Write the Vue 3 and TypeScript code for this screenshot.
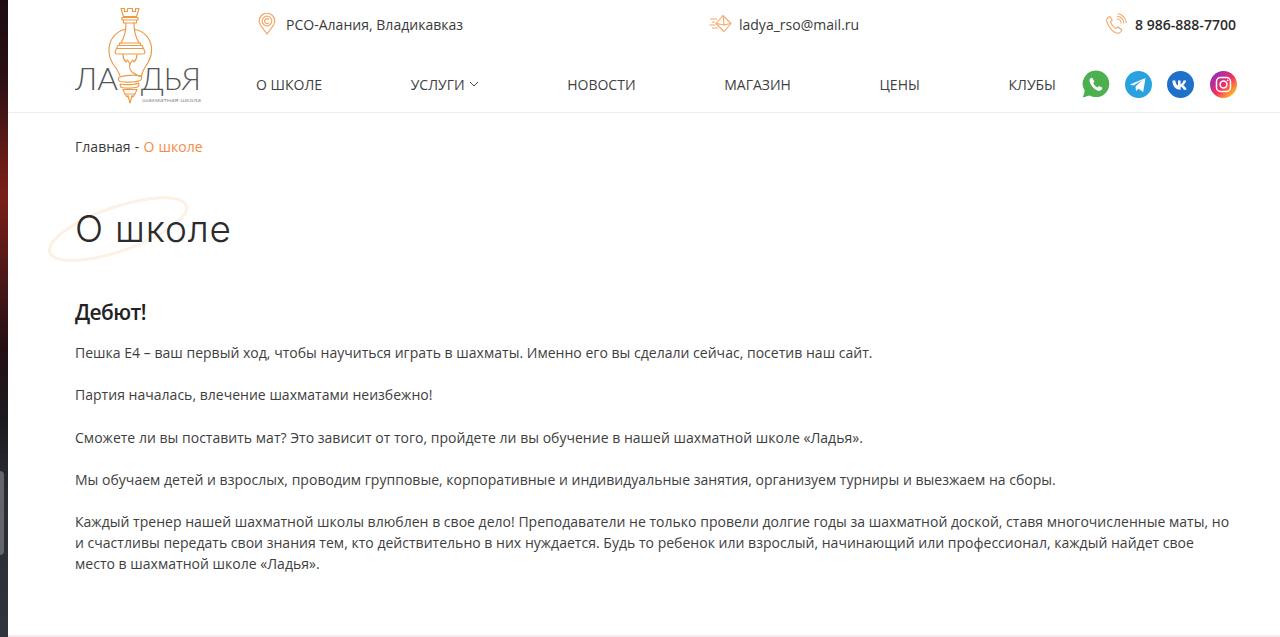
<script setup lang="ts">
const navItems = [
  { label: "О ШКОЛЕ", caret: false },
  { label: "УСЛУГИ", caret: true },
  { label: "НОВОСТИ", caret: false },
  { label: "МАГАЗИН", caret: false },
  { label: "ЦЕНЫ", caret: false },
  { label: "КЛУБЫ", caret: false },
];

const paragraphs = [
  "Пешка Е4 – ваш первый ход, чтобы научиться играть в шахматы. Именно его вы сделали сейчас, посетив наш сайт.",
  "Партия началась, влечение шахматами неизбежно!",
  "Сможете ли вы поставить мат? Это зависит от того, пройдете ли вы обучение в нашей шахматной школе «Ладья».",
  "Мы обучаем детей и взрослых, проводим групповые, корпоративные и индивидуальные занятия, организуем турниры и выезжаем на сборы.",
  "Каждый тренер нашей шахматной школы влюблен в свое дело! Преподаватели не только провели долгие годы за шахматной доской, ставя многочисленные маты, но и счастливы передать свои знания тем, кто действительно в них нуждается. Будь то ребенок или взрослый, начинающий или профессионал, каждый найдет свое место в шахматной школе «Ладья».",
];
</script>

<template>
  <div class="shell">
    <aside class="desktop-edge"><span class="edge-handle"></span></aside>
    <div class="page">
      <header class="site-header">
        <svg class="logo" viewBox="75 0 130 110" width="130" height="110" aria-label="Ладья">
          <g fill="none" stroke="#ee9a45" stroke-width="1.150" stroke-linejoin="round" stroke-linecap="round">
            <path d="M121 8.500h3.500v3h3v-3h5v3h3v-3h3.500l-2.500 8h-13z" />
            <path d="M122 17.500h16v2.500h-16zM123.500 20h13v3h-13z" />
            <path d="M126 23c0 8-1.500 14-5 20M134 23c0 8 1.500 14 5 20" />
            <path d="M119.500 43h21v2.500h-21zM118 45.500h24l1.500 3h-27z" />
            <path d="M116.500 48.500c-1 2-1.500 3-1.500 4 0 1 1 1.500 2 1.500h26c1 0 2-.5 2-1.500 0-1-.5-2-1.500-4" />
            <path d="M123 54.500c0 3 1.500 6 3 7.500l1.500-2 2.500 4 2.500-4 1.500 2c1.500-1.500 3-4.500 3-7.500" />
            <path d="M130 64c-1 4 0 6.500 2.500 8.500s5.500 3.500 9.500 3.500" />
            <path d="M120 76c-1-4-4-8-7-12-3-5-4.500-10-4-16 1-10 8-17 16-18.500M135 29.500c9 1.500 15.500 9 16.500 18 .5 6-1 11-4 16-2.500 4-5.500 8-6 12.500" />
            <path d="M119 77.500c5-2.500 17-3 22-1 1 1 1 3-1 4-5 2-16 2-20 1-2-1-2-3-1-4z" />
            <path d="M120.500 84c4 1 14 1 18-1 1 1 .5 3-1 4-4 1.500-12 1.500-16 .5-1.500-1-1.500-2.500-1-3.500z" />
            <path d="M123 89.500h14l-2 4.500h-10zM125 94l2 3 1-1.500 2 7.500 2-7.500 1 1.500 2-3" />
          </g>
          <text class="logo-word" x="75" y="90" textLength="43" lengthAdjust="spacingAndGlyphs">ЛА</text>
          <text class="logo-word" x="141" y="90" textLength="60" lengthAdjust="spacingAndGlyphs">ДЬЯ</text>
          <text class="logo-tag" x="142" y="102" textLength="59" lengthAdjust="spacingAndGlyphs">шахматная школа</text>
        </svg>

        <div class="header-main">
          <div class="contacts">
            <div class="contact">
              <svg class="ico-pin" viewBox="0 0 18 22" width="18" height="22">
                <g fill="none" stroke="#f4a766" stroke-width="1.200">
                  <path d="M9 21C5 15 1.200 12 1.200 8a7.800 7.800 0 0 1 15.600 0C16.800 12 13 15 9 21z" />
                  <circle cx="9" cy="8" r="4.800" />
                  <path d="M11 6.500a2.500 2.500 0 1 0 0 3.200" />
                </g>
              </svg>
              <span>РСО-Алания, Владикавказ</span>
            </div>
            <div class="contact mail">
              <svg viewBox="0 0 23 20" width="23" height="20">
                <g fill="none" stroke="#f4a766" stroke-width="1.100" stroke-linejoin="round">
                  <path d="M14 1.500l8 8-7 8-8-8z" />
                  <path d="M7.500 9.500l7.500 1.500 7-1.500M14 1.500l1 9.500" />
                  <path d="M1 5h7M3 8h3M0.500 11h6M3 14h6" />
                </g>
              </svg>
              <span>ladya_rso@mail.ru</span>
            </div>
            <div class="contact phone">
              <svg viewBox="0 0 22 22" width="22" height="22">
                <g fill="none" stroke="#f4a766" stroke-width="1.100" stroke-linecap="round" stroke-linejoin="round">
                  <path d="M5 3.500L2.500 5c-1.500 1.500-1 4 1 7.500s5 6.500 8 7.500c2 .5 3.500 0 4.500-1.500l.8-1.500-3.800-3-2 1.500c-1.500-.5-4.500-3.500-5.500-6.500l1.800-1.800z" />
                  <path d="M12 6a4 4 0 0 1 4 4M12.500 3.200a7 7 0 0 1 6.300 6.800M13 .8a9.500 9.500 0 0 1 8.300 9" />
                </g>
              </svg>
              <span>8 986-888-7700</span>
            </div>
          </div>

          <div class="nav-row">
            <nav class="nav">
              <a v-for="item in navItems" :key="item.label" class="nav-link">
                {{ item.label }}
                <svg v-if="item.caret" class="caret" viewBox="0 0 10 6" width="10" height="6">
                  <path d="M1 1l4 4 4-4" fill="none" stroke="#444" stroke-width="1" />
                </svg>
              </a>
            </nav>
            <div class="socials">
              <svg viewBox="0 0 28 28" width="28" height="28">
                <path d="M14 .5a13.300 13.300 0 0 1 0 26.600c-2.400 0-4.600-.6-6.500-1.700L.8 27.400l2-6.400A13.300 13.300 0 0 1 14 .5z" fill="#4caf50" />
                <path d="M10 7.500l-1.700 1c-1.300 1-1 3.500.8 6.500s4.500 5.300 7.200 5.800c1.500.3 3-.5 3.700-1.700l.4-1.300-3.400-1.800-1.500 1.500c-1.400-.4-3.500-2.500-4.200-4.400l1.100-1.500z" fill="#fff" />
              </svg>
              <svg viewBox="0 0 27 27" width="27" height="27">
                <circle cx="13.500" cy="13.500" r="13.500" fill="#29a3df" />
                <path d="M5 13.500L20.500 7l-2.300 14-4.700-3.300-2.500 2.300-.5-4.500 7-6.500-9 5.500z" fill="#fff" />
              </svg>
              <svg viewBox="0 0 27 27" width="27" height="27">
                <circle cx="13.500" cy="13.500" r="13.500" fill="#1f70c9" />
                <path d="M5.500 9.500h2.800c.3 2.800 1.500 4.600 2.700 5V9.500h2.600v3.800c1.200-.3 2.400-1.800 2.900-3.800h2.600c-.4 2.400-1.900 4-3 4.800 1.100.6 2.800 2 3.500 4.400h-2.900c-.5-1.600-1.800-2.900-3.100-3v3h-.4c-4.800 0-7.500-3.300-7.700-8.700z" fill="#fff" />
              </svg>
              <svg class="ig" viewBox="0 0 27 27" width="27" height="27">
                <defs>
                  <linearGradient id="ig" x1="0.100" y1="0.900" x2="0.900" y2="0.100">
                    <stop offset="0" stop-color="#ffcc1f" />
                    <stop offset="0.450" stop-color="#f5305f" />
                    <stop offset="1" stop-color="#8c2bc4" />
                  </linearGradient>
                </defs>
                <circle cx="13.500" cy="13.500" r="13.500" fill="url(#ig)" transform="rotate(-90 13.500 13.500)" />
                <g fill="none" stroke="#fff" stroke-width="1.500">
                  <rect x="6.500" y="6.500" width="14" height="14" rx="4" />
                  <circle cx="13.500" cy="13.500" r="3.400" />
                </g>
                <circle cx="17.700" cy="9.300" r="0.900" fill="#fff" />
              </svg>
            </div>
          </div>
        </div>
      </header>

      <main class="content">
        <div class="crumbs">Главная - <span class="crumb-current">О школе</span></div>
        <div class="title-wrap">
          <svg class="title-swoosh" viewBox="0 0 142 70" width="142" height="70">
            <ellipse cx="70" cy="35" rx="72" ry="22" transform="rotate(-19 70 35)" fill="none" stroke="#fdf0e4" stroke-width="3" />
          </svg>
          <h1>О школе</h1>
        </div>
        <h2>Дебют!</h2>
        <p v-for="(text, i) in paragraphs" :key="i">{{ text }}</p>
      </main>
      <div class="bottom-line"></div>
    </div>
  </div>
</template>

<style scoped>
.shell {
  display: flex;
  height: 637px;
  overflow: hidden;
  background: #fff;
  font-family: "Open Sans", "Liberation Sans", sans-serif;
  color: #3a3a3a;
}

.desktop-edge {
  position: relative;
  flex: 0 0 8px;
  background: linear-gradient(
    180deg,
    #1c0c10 0%,
    #2a1014 12%,
    #6a1c18 26%,
    #7a1f17 31%,
    #5a1a18 40%,
    #231014 55%,
    #1b1a20 66%,
    #2a2d36 78%,
    #30343d 100%
  );
}

.edge-handle {
  position: absolute;
  top: 471px;
  left: 0;
  width: 4px;
  height: 84px;
  background: #63656a;
  border-radius: 0 4px 4px 0;
}

.page {
  position: relative;
  flex: 1;
  min-width: 0;
  display: flex;
  flex-direction: column;
}

.site-header {
  display: flex;
  height: 112px;
  padding: 0 44px 0 67px;
  border-bottom: 1px solid #ececec;
  flex: none;
}

.logo {
  flex: none;
  margin-right: 51px;
}

.logo-word {
  font-family: "Lato", "Inter", sans-serif;
  font-weight: 300;
  font-size: 31px;
  fill: #555;
}

.logo-tag {
  font-family: "Open Sans", sans-serif;
  font-size: 6px;
  fill: #888;
}

.header-main {
  flex: 1;
  min-width: 0;
  display: flex;
  flex-direction: column;
}

.contacts {
  display: flex;
  justify-content: space-between;
  align-items: center;
  flex: none;
  height: 48px;
  padding-left: 2px;
}

.contact {
  display: flex;
  align-items: center;
  gap: 10px;
  font-size: 14px;
  letter-spacing: 0.02px;
  color: #3a3a3a;
}

.mail {
  gap: 7px;
}

.phone {
  font-weight: 600;
  color: #2b2b2b;
  gap: 8px;
}

.nav-row {
  display: flex;
  align-items: center;
  justify-content: space-between;
  flex: none;
  height: 50px;
  margin-top: 11px;
}

.nav {
  display: flex;
  justify-content: space-between;
  width: 800px;
}

.nav-link {
  display: flex;
  align-items: center;
  gap: 4px;
  font-size: 14px;
  color: #3f3f3f;
}

.socials {
  display: flex;
  align-items: center;
  gap: 15px;
  margin-right: -1px;
}

.socials svg {
  display: block;
}

.socials .ig {
  margin-left: 1px;
}

.content {
  padding: 24px 46px 0 67px;
  flex: 1;
}

.crumbs {
  font-size: 14px;
  line-height: 20px;
  letter-spacing: 0.02px;
  word-spacing: 0.5px;
  color: #3a3a3a;
}

.crumb-current {
  color: #f58a4b;
}

.title-wrap {
  position: relative;
  margin-top: 50px;
}

.title-swoosh {
  position: absolute;
  left: -27px;
  top: -13px;
  overflow: visible;
}

h1 {
  position: relative;
  margin: 0;
  font-family: "Inter", "Open Sans", sans-serif;
  font-weight: 300;
  font-size: 37px;
  line-height: 44px;
  letter-spacing: 0.8px;
  color: #2b2b2b;
}

h2 {
  margin: 46px 0 15px;
  font-size: 21px;
  line-height: 30px;
  font-weight: 600;
  letter-spacing: -0.6px;
  color: #222;
}

p {
  margin: 0 0 21.25px;
  font-size: 14px;
  line-height: 21px;
  letter-spacing: 0.02px;
  color: #3e3e3e;
}

.bottom-line {
  position: absolute;
  left: 0;
  right: 0;
  bottom: 0;
  height: 2px;
  background: #f9e9f1;
}
</style>

<style>
html,
body {
  margin: 0;
  overflow: hidden;
  background: #fff;
}
</style>
